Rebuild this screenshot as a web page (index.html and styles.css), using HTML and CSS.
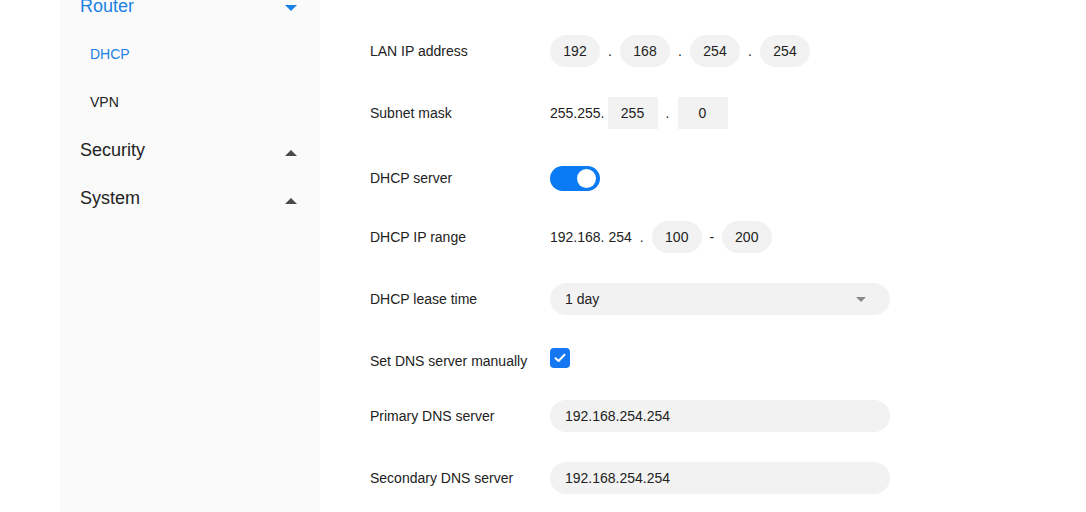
FILE: index.html
```html
<!DOCTYPE html>
<html lang="en">
<head>
    <meta charset="UTF-8">
    <meta name="viewport" content="width=device-width, initial-scale=1.0">
    <title>Router Settings - DHCP</title>
    <link rel="stylesheet" href="styles.css">
</head>
<body>
    <div class="layout">
        <aside class="sidebar">
            <ul class="nav">
                <li class="nav-group active">
                    <span>Router</span>
                    <span class="caret down"></span>
                </li>
                <li class="nav-item active">DHCP</li>
                <li class="nav-item">VPN</li>
                <li class="nav-group">
                    <span>Security</span>
                    <span class="caret up"></span>
                </li>
                <li class="nav-group">
                    <span>System</span>
                    <span class="caret up"></span>
                </li>
            </ul>
        </aside>

        <main class="content">
            <form class="settings">
                <div class="row">
                    <label class="label">LAN IP address</label>
                    <div class="field">
                        <input class="octet" type="text" value="192">
                        <span class="sep">.</span>
                        <input class="octet" type="text" value="168">
                        <span class="sep">.</span>
                        <input class="octet" type="text" value="254">
                        <span class="sep">.</span>
                        <input class="octet" type="text" value="254">
                    </div>
                </div>

                <div class="row">
                    <label class="label">Subnet mask</label>
                    <div class="field">
                        <span class="prefix">255.255.</span>
                        <input class="octet square" type="text" value="255">
                        <span class="sep">.</span>
                        <input class="octet square" type="text" value="0">
                    </div>
                </div>

                <div class="row row-toggle">
                    <label class="label">DHCP server</label>
                    <div class="field">
                        <span class="toggle on"><span class="knob"></span></span>
                    </div>
                </div>

                <div class="row">
                    <label class="label">DHCP IP range</label>
                    <div class="field">
                        <span class="fixed">192.168. 254</span>
                        <span class="sep">.</span>
                        <input class="octet" type="text" value="100">
                        <span class="sep">-</span>
                        <input class="octet" type="text" value="200">
                    </div>
                </div>

                <div class="row">
                    <label class="label">DHCP lease time</label>
                    <div class="field">
                        <div class="select">
                            <span>1 day</span>
                            <span class="select-caret"></span>
                        </div>
                    </div>
                </div>

                <div class="row row-check">
                    <label class="label">Set DNS server manually</label>
                    <div class="field">
                        <span class="checkbox checked">
                            <svg width="12" height="10" viewBox="0 0 12 10">
                                <path d="M1.5 5.2 L4.6 8 L10.5 1.8" fill="none" stroke="#fff" stroke-width="2" stroke-linecap="round" stroke-linejoin="round"/>
                            </svg>
                        </span>
                    </div>
                </div>

                <div class="row">
                    <label class="label">Primary DNS server</label>
                    <div class="field">
                        <input class="text-input" type="text" value="192.168.254.254">
                    </div>
                </div>

                <div class="row">
                    <label class="label">Secondary DNS server</label>
                    <div class="field">
                        <input class="text-input" type="text" value="192.168.254.254">
                    </div>
                </div>
            </form>
        </main>
    </div>
</body>
</html>
```

FILE: styles.css
```css
body {
    margin: 0;
    padding: 0;
    font-family: "Liberation Sans", Arial, sans-serif;
    font-size: 14px;
    color: #222;
    background: #fff;
}

.layout {
    display: flex;
    height: 512px;
    overflow: hidden;
    padding-left: 60px;
}

/* Sidebar */
.sidebar {
    width: 260px;
    flex-shrink: 0;
    background: #fafafa;
}

.nav {
    list-style: none;
    margin: -18px 0 0 0;
    padding: 0;
}

.nav-group {
    height: 48px;
    display: flex;
    align-items: center;
    justify-content: space-between;
    padding: 0 23px 0 20px;
    font-size: 18px;
    color: #222;
}

.nav-group.active {
    color: #1a82e4;
}

.nav-item {
    height: 48px;
    display: flex;
    align-items: center;
    padding-left: 30px;
    font-size: 14px;
    color: #222;
}

.nav-item.active {
    color: #1a82e4;
}

.caret {
    width: 0;
    height: 0;
    border-left: 6px solid transparent;
    border-right: 6px solid transparent;
}

.caret.down {
    border-top: 6px solid #1a82e4;
    margin-top: 4px;
}

.caret.up {
    border-bottom: 6px solid #4a4a4a;
    margin-top: 6px;
}

/* Main */
.content {
    flex: 1;
    padding: 35px 0 0 50px;
}

.settings {
    display: flex;
    flex-direction: column;
    gap: 30px;
}

.row {
    display: flex;
    align-items: center;
    height: 32px;
}

.row-toggle {
    margin: 3px 0 -3px 0;
}

.row-check {
    height: 20px;
    margin: 3px 0 2px 0;
}

.label {
    width: 180px;
    flex-shrink: 0;
}

.row-check .label {
    padding-top: 5px;
}

.field {
    display: flex;
    align-items: center;
}

.octet {
    width: 50px;
    height: 32px;
    box-sizing: border-box;
    border: none;
    border-radius: 16px;
    background: #f2f2f2;
    font-family: inherit;
    font-size: 14px;
    color: #222;
    text-align: center;
    padding: 0;
    outline: none;
}

.octet.square {
    border-radius: 0;
}

.sep {
    width: 20px;
    text-align: center;
}

.prefix {
    margin-right: 3px;
}

.toggle {
    width: 50px;
    height: 25px;
    border-radius: 13px;
    background: #ccc;
    display: flex;
    align-items: center;
    box-sizing: border-box;
    padding: 0 4px;
}

.toggle.on {
    background: #0a7bf5;
    justify-content: flex-end;
}

.knob {
    width: 19px;
    height: 19px;
    border-radius: 50%;
    background: #fff;
}

.select {
    width: 340px;
    height: 32px;
    box-sizing: border-box;
    border-radius: 16px;
    background: #f2f2f2;
    display: flex;
    align-items: center;
    justify-content: space-between;
    padding: 0 24px 0 15px;
}

.select-caret {
    width: 0;
    height: 0;
    border-left: 5px solid transparent;
    border-right: 5px solid transparent;
    border-top: 5px solid #8a8a8a;
}

.checkbox {
    width: 20px;
    height: 20px;
    border-radius: 4px;
    background: #ccc;
    display: flex;
    align-items: center;
    justify-content: center;
}

.checkbox.checked {
    background: #1677f2;
}

.text-input {
    width: 340px;
    height: 32px;
    box-sizing: border-box;
    border: none;
    border-radius: 16px;
    background: #f2f2f2;
    font-family: inherit;
    font-size: 14px;
    color: #222;
    padding: 0 15px;
    outline: none;
}
```
